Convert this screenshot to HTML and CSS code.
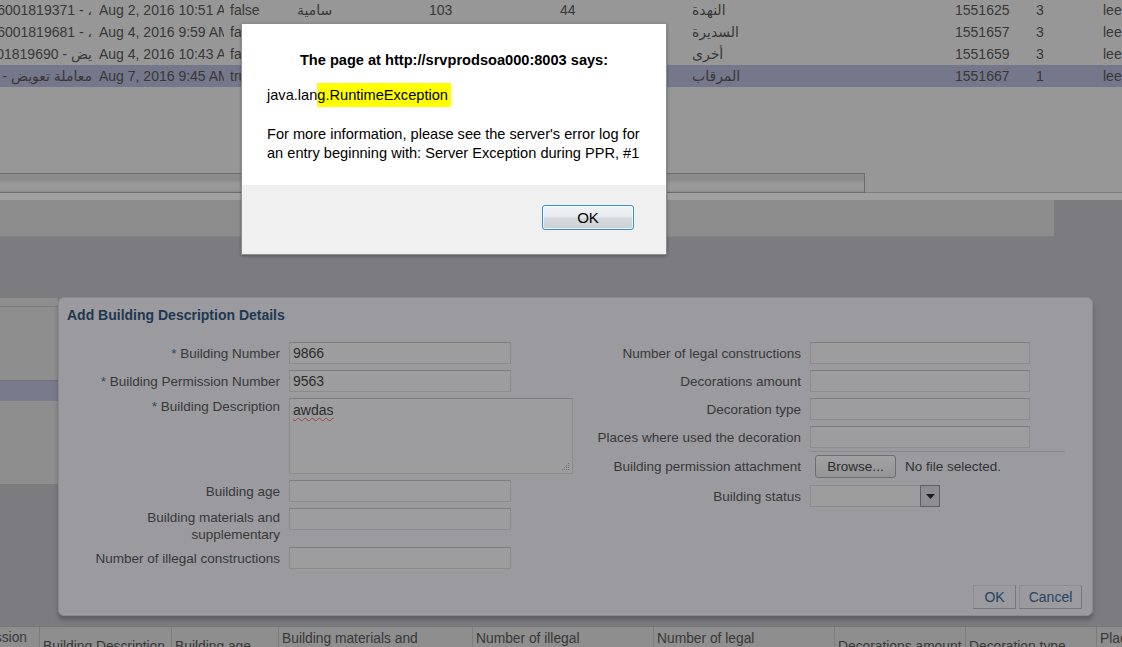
FILE: index.html
```html
<!DOCTYPE html>
<html>
    <head>
        <meta charset="utf-8">
        <title>Add Building Description Details</title>
        <meta name="viewport" content="width=device-width, initial-scale=1">
        <link rel="stylesheet" href="styles.css">
    </head>
    <body>
        <div id="page">
            <div class="grid">
                <div class="row">
                    <div class="c c1"><span>6001819371 - ،</span></div>
                    <div class="c c2">Aug 2, 2016 10:51 AM</div>
                    <div class="c c3">false</div>
                    <div class="c c4">سامية</div>
                    <div class="c c5">103</div>
                    <div class="c c6">44</div>
                    <div class="c c7">النهدة</div>
                    <div class="c c8">1551625</div>
                    <div class="c c9">3</div>
                    <div class="c c10">leelawadee</div>
                </div>
                <div class="row">
                    <div class="c c1"><span>6001819681 - ،</span></div>
                    <div class="c c2">Aug 4, 2016 9:59 AM</div>
                    <div class="c c3">false</div>
                    <div class="c c4"></div>
                    <div class="c c5"></div>
                    <div class="c c6"></div>
                    <div class="c c7">السديرة</div>
                    <div class="c c8">1551657</div>
                    <div class="c c9">3</div>
                    <div class="c c10">leelawadee</div>
                </div>
                <div class="row">
                    <div class="c c1"><span>6001819690 - يض</span></div>
                    <div class="c c2">Aug 4, 2016 10:43 AM</div>
                    <div class="c c3">false</div>
                    <div class="c c4"></div>
                    <div class="c c5"></div>
                    <div class="c c6"></div>
                    <div class="c c7">أخرى</div>
                    <div class="c c8">1551659</div>
                    <div class="c c9">3</div>
                    <div class="c c10">leelawadee</div>
                </div>
                <div class="row sel">
                    <div class="c c1"><span>6001819700 - معاملة تعويض</span></div>
                    <div class="c c2">Aug 7, 2016 9:45 AM</div>
                    <div class="c c3">true</div>
                    <div class="c c4"></div>
                    <div class="c c5"></div>
                    <div class="c c6"></div>
                    <div class="c c7">المرقاب</div>
                    <div class="c c8">1551667</div>
                    <div class="c c9">1</div>
                    <div class="c c10">leelawadee</div>
                </div>
                <div class="grid-empty"></div>
            </div>

            <div class="hbar">
                <div class="track"></div>
                <div class="hbar-rest"></div>
            </div>
            <div class="band"></div>
            <div class="tools">
                <div class="tools-main"></div>
            </div>

            <div class="lower">
                <div class="side">
                    <div class="s-top"></div>
                    <div class="s-gray"></div>
                    <div class="s-sel"></div>
                    <div class="s-gray2"></div>
                </div>
            </div>

            <div class="foot">
                <div class="th th1"><span>Building Permission Number</span></div>
                <div class="th th2">Building Description</div>
                <div class="th th3">Building age</div>
                <div class="th th4">Building materials and<br>supplementary</div>
                <div class="th th5">Number of illegal<br>constructions</div>
                <div class="th th6">Number of legal<br>constructions</div>
                <div class="th th7">Decorations amount</div>
                <div class="th th8">Decoration type</div>
                <div class="th th9">Places where<br>used</div>
            </div>

            <!-- popup: add building description -->
            <div class="dialog">
                <div class="dlg-title">Add Building Description Details</div>
                <div class="form">
                    <div class="col col-left">
                        <div class="lbl"><span class="req">*</span> Building Number</div>
                        <div class="field w-left">9866</div>
                        <div class="lbl"><span class="req">*</span> Building Permission Number</div>
                        <div class="field w-left">9563</div>
                        <div class="lbl lbl-top"><span class="req">*</span> Building Description</div>
                        <div class="field area">
                            <span class="spell">awdas</span>
                            <svg class="grip" width="9" height="9" viewBox="0 0 9 9">
                                <rect x="7" y="1" width="1" height="1" fill="#6e6e6e"/>
                                <rect x="5" y="3" width="1" height="1" fill="#6e6e6e"/>
                                <rect x="7" y="3" width="1" height="1" fill="#6e6e6e"/>
                                <rect x="3" y="5" width="1" height="1" fill="#6e6e6e"/>
                                <rect x="5" y="5" width="1" height="1" fill="#6e6e6e"/>
                                <rect x="7" y="5" width="1" height="1" fill="#6e6e6e"/>
                                <rect x="1" y="7" width="1" height="1" fill="#6e6e6e"/>
                                <rect x="3" y="7" width="1" height="1" fill="#6e6e6e"/>
                                <rect x="5" y="7" width="1" height="1" fill="#6e6e6e"/>
                                <rect x="7" y="7" width="1" height="1" fill="#6e6e6e"/>
                            </svg>
                        </div>
                        <div class="lbl">Building age</div>
                        <div class="field w-left"></div>
                        <div class="lbl lbl-2">Building materials and<br>supplementary</div>
                        <div class="field w-left"></div>
                        <div class="lbl">Number of illegal constructions</div>
                        <div class="field w-left"></div>
                    </div>
                    <div class="col col-right">
                        <div class="lbl">Number of legal constructions</div>
                        <div class="field w-right"></div>
                        <div class="lbl">Decorations amount</div>
                        <div class="field w-right"></div>
                        <div class="lbl">Decoration type</div>
                        <div class="field w-right"></div>
                        <div class="lbl">Places where used the decoration</div>
                        <div class="field w-right"></div>
                        <div class="lbl lbl-file">Building permission attachment</div>
                        <div class="file">
                            <span class="browse">Browse...</span>
                            <span class="nofile">No file selected.</span>
                        </div>
                        <div class="lbl">Building status</div>
                        <div class="select">
                            <span class="drop">
                                <svg width="9" height="5" viewBox="0 0 9 5"><path d="M0 0h9L4.5 5z" fill="#1e1e1e"/></svg>
                            </span>
                        </div>
                    </div>
                </div>
                <div class="dlg-foot">
                    <span class="dlg-btn btn-ok">OK</span>
                    <span class="dlg-btn btn-cancel">Cancel</span>
                </div>
            </div>

            <!-- browser alert -->
            <div class="alert">
                <div class="alert-body">
                    <div class="alert-title">The page at http://srvprodsoa000:8003 says:</div>
                    <div class="alert-msg">java.lan<span class="hl">g.RuntimeException</span></div>
                    <div class="alert-text">For more information, please see the server's error log for<br>an entry beginning with: Server Exception during PPR, #1</div>
                </div>
                <div class="alert-foot">
                    <button class="alert-ok" type="button">OK</button>
                </div>
            </div>
        </div>
    </body>
</html>
```

FILE: styles.css
```css
body{
    margin: 0;
    background-color: #7b7b80;
    font-family: "Liberation Sans", "DejaVu Sans", Arial, sans-serif;
    color: #383838;
    overflow: hidden;
}
#page{
    position: relative;
    width: 1122px;
    height: 647px;
    overflow: hidden;
}

/* top result table */
.grid{
    background-color: #979797;
    margin-top: -1px;
    font-size: 14px;
}
.row{
    display: flex;
    height: 22px;
    line-height: 22px;
}
.row.sel{
    background-color: #75778a;
}
.c{
    flex-shrink: 0;
    overflow: hidden;
    white-space: nowrap;
    padding-left: 3px;
    box-sizing: border-box;
}
.c1{
    width: 96px;
    display: flex;
    justify-content: flex-end;
    padding: 0 4px 0 0;
}
.c1 span{
    flex-shrink: 0;
}
.c2{ width: 128px; }
.c3{ width: 71px; padding-left: 6px; }
.c4{ width: 132px; padding-left: 2px; }
.c5{ width: 131px; padding-left: 2px; }
.c6{ width: 130px; padding-left: 2px; }
.c7{ width: 265px; padding-left: 4px; }
.c8{ width: 80px; padding-left: 2px; }
.c9{ width: 68px; }
.c10{ width: 30px; padding-left: 2px; }
.grid-empty{
    height: 86px;
}

/* scroll bar and toolbar bands */
.hbar{
    display: flex;
    height: 20px;
    background-color: #979797;
}
.track{
    width: 865px;
    box-sizing: border-box;
    border: 1px solid #6c6c6c;
    border-left: none;
    background: linear-gradient(#8b8b8b 0, #8b8b8b 35%, #989898 50%, #999999 85%, #8d8d8d 100%);
}
.hbar-rest{
    flex: 1;
    border-bottom: 1px solid #7e7e7e;
}
.band{
    height: 7px;
    background-color: #a0a0a0;
}
.tools{
    display: flex;
    height: 37px;
}
.tools-main{
    width: 1054px;
    background-color: #8c8c8c;
    border-bottom: 1px solid #828282;
}

/* dark area behind popup */
.lower{
    display: flex;
    height: 389px;
}
.side{
    width: 58px;
    display: flex;
    flex-direction: column;
    padding-top: 61px;
}
.s-top{
    height: 8px;
    background-color: #8e8e8f;
    border-bottom: 1px solid #7d7d7d;
}
.s-gray{
    height: 73px;
    background-color: #8e8e8f;
}
.s-sel{
    height: 20px;
    background-color: #797b8c;
    border-top: 1px solid #6f6f74;
}
.s-gray2{
    height: 83px;
    background-color: #8e8e8f;
}

/* lower table headers */
.foot{
    display: flex;
    height: 40px;
    background-color: #8e8e8e;
    border-top: 1px solid #767676;
    font-size: 13.8px;
    line-height: 16px;
}
.th{
    flex-shrink: 0;
    box-sizing: border-box;
    display: flex;
    align-items: center;
    overflow: hidden;
    white-space: nowrap;
    padding-left: 3px;
    border-right: 1px solid #7c7c7c;
}
.th1{
    width: 40px;
    justify-content: flex-end;
    padding: 0 12px 0 0;
}
.th1 span{
    flex-shrink: 0;
    width: 136px;
    white-space: normal;
    text-align: right;
    align-self: flex-start;
    padding-top: 3px;
}
.th2{ width: 132px; }
.th3{ width: 107px; }
.th4{ width: 194px; }
.th5{ width: 181px; }
.th6{ width: 181px; }
.th7{ width: 131px; }
.th8{ width: 131px; }
.th9{ width: 40px; border-right: none; }

/* popup dialog */
.dialog{
    position: absolute;
    left: 58px;
    top: 297px;
    width: 1035px;
    height: 319px;
    box-sizing: border-box;
    border: 1px solid #8a8a90;
    border-radius: 6px;
    background-color: #9a9a9f;
    box-shadow: 0 4px 4px rgba(40, 40, 45, 0.35);
    display: flex;
    flex-direction: column;
    padding: 0 10px 6px 7px;
}
.dlg-title{
    padding: 8px 0 0 1px;
    line-height: 18px;
    font-size: 14px;
    font-weight: bold;
    color: #1f3850;
}
.form{
    display: flex;
    align-items: flex-start;
    margin-top: 18px;
    gap: 18px;
}
.col{
    display: grid;
    column-gap: 9px;
    row-gap: 6px;
    align-items: start;
    align-content: start;
}
.col-left{
    grid-template-columns: 214px 284px;
}
.col-right{
    grid-template-columns: 210px 220px;
}
.lbl{
    text-align: right;
    font-size: 13.5px;
    line-height: 17px;
    padding-top: 3px;
    white-space: nowrap;
    color: #383838;
}
.req{
    color: #2a4866;
}
.lbl-top{
    padding-top: 0;
}
.lbl-2{
    padding-top: 1px;
    margin-bottom: -2px;
}
.lbl-file{
    padding-top: 4px;
}
.field{
    height: 22px;
    box-sizing: border-box;
    border: 1px solid #8b8b8d;
    border-top-color: #7d7d80;
    background-color: #9d9d9f;
    padding: 0 3px;
    font-size: 14px;
    line-height: 20px;
    color: #2c2c2c;
}
.w-left{
    width: 222px;
}
.w-right{
    width: 220px;
}
.area{
    position: relative;
    width: 284px;
    height: 76px;
    padding-top: 1px;
}
.spell{
    text-decoration: underline wavy #a04040;
    text-decoration-thickness: 1px;
    text-underline-offset: 2px;
}
.grip{
    position: absolute;
    right: 2px;
    bottom: 2px;
}
.file{
    position: relative;
    display: flex;
    align-items: center;
    gap: 9px;
    height: 25px;
    box-sizing: border-box;
    padding-left: 5px;
    font-size: 13.5px;
    white-space: nowrap;
}
.file::before{
    content: "";
    position: absolute;
    left: 0;
    top: -3px;
    width: 255px;
    border-top: 1px solid #88888c;
}
.browse{
    width: 81px;
    height: 23px;
    box-sizing: border-box;
    border: 1px solid #6e6e72;
    border-radius: 3px;
    background: linear-gradient(#a2a2a4, #949496);
    text-align: center;
    line-height: 21px;
    color: #2c2c2c;
}
.nofile{
    color: #333333;
}
.select{
    width: 130px;
    height: 22px;
    box-sizing: border-box;
    border: 1px solid #8b8b8d;
    background-color: #9d9d9f;
    display: flex;
    justify-content: flex-end;
}
.drop{
    width: 20px;
    box-sizing: border-box;
    margin: -1px -1px -1px 0;
    height: 22px;
    border: 1px solid #5e5e62;
    background-color: #8e8e92;
    display: flex;
    align-items: center;
    justify-content: center;
}
.dlg-foot{
    margin-top: auto;
    display: flex;
    justify-content: flex-end;
    gap: 3px;
}
.dlg-btn{
    height: 24px;
    box-sizing: border-box;
    border: 1px solid #8d8d92;
    border-bottom-color: #76767b;
    border-right-color: #76767b;
    text-align: center;
    line-height: 22px;
    font-size: 14px;
    color: #27445f;
}
.btn-ok{
    width: 43px;
}
.btn-cancel{
    width: 63px;
}

/* browser alert box */
.alert{
    position: absolute;
    left: 241px;
    top: 23px;
    width: 426px;
    height: 232px;
    box-sizing: border-box;
    border: 1px solid #8c8c8c;
    box-shadow: 0 1px 3px rgba(0, 0, 0, 0.3);
    display: flex;
    flex-direction: column;
    font-size: 14.6px;
    color: #000000;
}
.alert-body{
    height: 161px;
    background-color: #ffffff;
    padding: 27px 0 0 25px;
    box-sizing: border-box;
}
.alert-title{
    font-weight: bold;
    text-align: center;
    line-height: 18px;
    margin-left: -25px;
}
.alert-msg{
    margin-top: 17px;
    line-height: 18px;
}
.hl{
    background-color: #ffff00;
    padding: 4px 3px 4px 0;
}
.alert-text{
    margin-top: 21px;
    line-height: 19px;
}
.alert-foot{
    flex: 1;
    background-color: #f0f0f0;
    display: flex;
    justify-content: flex-end;
    align-items: flex-start;
    padding: 20px 32px 0 0;
}
.alert-ok{
    width: 92px;
    height: 25px;
    border: 1px solid #3c8fcf;
    border-radius: 3px;
    background: linear-gradient(#f0f4f7 0, #e6eaee 48%, #d6d9dc 52%, #cfd2d5 100%);
    box-shadow: inset 0 0 0 1px rgba(255, 255, 255, 0.7);
    font-family: "Liberation Sans", Arial, sans-serif;
    font-size: 15px;
    color: #000000;
    padding: 0;
}
```
